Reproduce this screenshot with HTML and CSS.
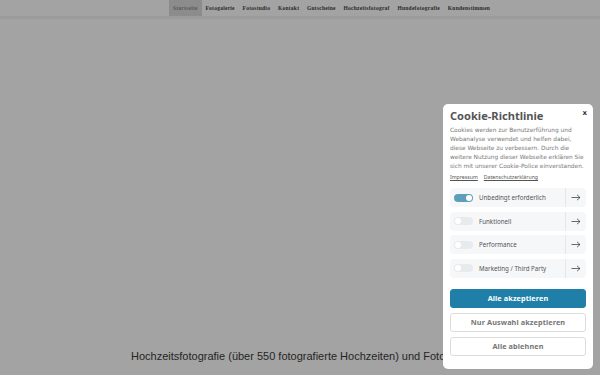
FILE: index.html
```html
<!DOCTYPE html>
<html>

<head>
    <title>Startseite</title>
    <link rel="stylesheet" href="styles.css">
</head>

<body>
    <div class="nav-bar">
        <ul class="nav">
            <li class="active">Startseite</li>
            <li>Fotogalerie</li>
            <li>Fotostudio</li>
            <li>Kontakt</li>
            <li>Gutscheine</li>
            <li>Hochzeitsfotograf</li>
            <li>Hundefotografie</li>
            <li>Kundenstimmen</li>
        </ul>
    </div>

    <div class="content">
        <p class="lead">Hochzeitsfotografie (über 550 fotografierte Hochzeiten) und Fotostudio</p>
    </div>

    <div class="overlay"></div>

    <div class="cookie-box">
        <div class="cookie-head">
            <h2>Cookie-Richtlinie</h2>
            <span class="close">x</span>
        </div>
        <p class="cookie-text">
            Cookies werden zur Benutzerführung und Webanalyse verwendet und helfen dabei, diese Webseite zu verbessern. Durch die weitere Nutzung dieser Webseite erklären Sie sich mit unserer Cookie-Police einverstanden.
        </p>
        <div class="cookie-links">
            <a>Impressum</a>
            <a>Datenschutzerklärung</a>
        </div>

        <div class="cookie-groups">
            <div class="group">
                <div class="group-main">
                    <span class="toggle on"></span>
                    <span class="group-name">Unbedingt erforderlich</span>
                </div>
                <span class="group-arrow">
                    <svg width="10" height="7" viewBox="0 0 10 7"><path d="M0.5 3.5H9M6 0.8L9 3.5L6 6.2" fill="none" stroke="#444" stroke-width="0.8"/></svg>
                </span>
            </div>
            <div class="group">
                <div class="group-main">
                    <span class="toggle"></span>
                    <span class="group-name">Funktionell</span>
                </div>
                <span class="group-arrow">
                    <svg width="10" height="7" viewBox="0 0 10 7"><path d="M0.5 3.5H9M6 0.8L9 3.5L6 6.2" fill="none" stroke="#444" stroke-width="0.8"/></svg>
                </span>
            </div>
            <div class="group">
                <div class="group-main">
                    <span class="toggle"></span>
                    <span class="group-name">Performance</span>
                </div>
                <span class="group-arrow">
                    <svg width="10" height="7" viewBox="0 0 10 7"><path d="M0.5 3.5H9M6 0.8L9 3.5L6 6.2" fill="none" stroke="#444" stroke-width="0.8"/></svg>
                </span>
            </div>
            <div class="group">
                <div class="group-main">
                    <span class="toggle"></span>
                    <span class="group-name">Marketing / Third Party</span>
                </div>
                <span class="group-arrow">
                    <svg width="10" height="7" viewBox="0 0 10 7"><path d="M0.5 3.5H9M6 0.8L9 3.5L6 6.2" fill="none" stroke="#444" stroke-width="0.8"/></svg>
                </span>
            </div>
        </div>

        <div class="cookie-buttons">
            <button class="btn btn-primary">Alle akzeptieren</button>
            <button class="btn">Nur Auswahl akzeptieren</button>
            <button class="btn">Alle ablehnen</button>
        </div>
    </div>
</body>

</html>
```

FILE: styles.css
```css
body {
    margin: 0;
    height: 375px;
    overflow: hidden;
    background-color: #ffffff;
    font-family: "Liberation Sans", Arial, sans-serif;
}

.nav-bar {
    height: 16px;
    border-bottom: 3px solid #f2f2f2;
}

.nav {
    list-style: none;
    margin: 0;
    padding: 0 0 0 169px;
    display: flex;
}

.nav li {
    font-family: "Liberation Serif", serif;
    font-weight: bold;
    font-size: 5.5px;
    letter-spacing: 0.25px;
    line-height: 16px;
    padding: 0 3.9px;
    color: #444;
}

.nav li.active {
    background-color: #dcdcdc;
    color: #8a8a8a;
}

.content {
    padding-top: 331px;
    padding-left: 131px;
}

.lead {
    margin: 0;
    white-space: nowrap;
    font-size: 11px;
    color: #3a3a3a;
}

.overlay {
    position: absolute;
    inset: 0;
    background-color: rgba(0, 0, 0, 0.36);
}

.cookie-box {
    position: absolute;
    left: 443px;
    top: 104px;
    width: 150px;
    box-sizing: border-box;
    padding: 4px 7px 13px 7px;
    background-color: #ffffff;
    border-radius: 5px;
    font-family: "Noto Sans", sans-serif;
    color: #666;
}

.cookie-head {
    display: flex;
    justify-content: space-between;
    align-items: flex-start;
}

.cookie-head h2 {
    margin: 0;
    font-size: 11.1px;
    line-height: 16px;
    color: #555;
}

.close {
    font-family: "DejaVu Sans", sans-serif;
    font-size: 7px;
    font-weight: bold;
    color: #333;
    line-height: 10px;
    margin-right: -1px;
}

.cookie-text {
    margin: 2px 0 0 0;
    font-family: "DejaVu Sans", sans-serif;
    font-size: 5.85px;
    line-height: 9px;
    color: #777;
}

.cookie-links {
    margin-top: 2px;
    display: flex;
    gap: 6px;
    font-size: 5.2px;
    line-height: 9px;
}

.cookie-links a {
    color: #555;
    text-decoration: underline;
}

.cookie-groups {
    margin-top: 6px;
    display: flex;
    flex-direction: column;
    gap: 4.5px;
}

.group {
    display: flex;
    height: 19px;
    background-color: #f5f7f9;
    border-radius: 4px;
}

.group-main {
    flex: 1;
    display: flex;
    align-items: center;
    gap: 6px;
    padding-left: 4px;
}

.toggle {
    width: 19px;
    height: 8px;
    border-radius: 4px;
    background-color: #e9eaeb;
    position: relative;
}

.toggle::after {
    content: "";
    position: absolute;
    left: 1px;
    top: 1px;
    width: 6px;
    height: 6px;
    border-radius: 50%;
    background-color: #ffffff;
}

.toggle.on {
    background-color: #5d9fba;
}

.toggle.on::after {
    left: 12px;
}

.group-name {
    font-size: 6.2px;
    color: #555;
}

.group-arrow {
    width: 20px;
    border-left: 1px solid #e4e6e8;
    display: flex;
    align-items: center;
    justify-content: center;
}

.cookie-buttons {
    margin-top: 11px;
    display: flex;
    flex-direction: column;
    gap: 5px;
}

.btn {
    height: 19px;
    padding: 0;
    border: 1px solid #dcdcdc;
    border-radius: 3px;
    background-color: #ffffff;
    font-family: "Noto Sans", sans-serif;
    font-weight: bold;
    font-size: 7.3px;
    color: #777;
    letter-spacing: 0.1px;
}

.btn-primary {
    background-color: #1f7fa8;
    border-color: #1f7fa8;
    color: #ffffff;
}
```
